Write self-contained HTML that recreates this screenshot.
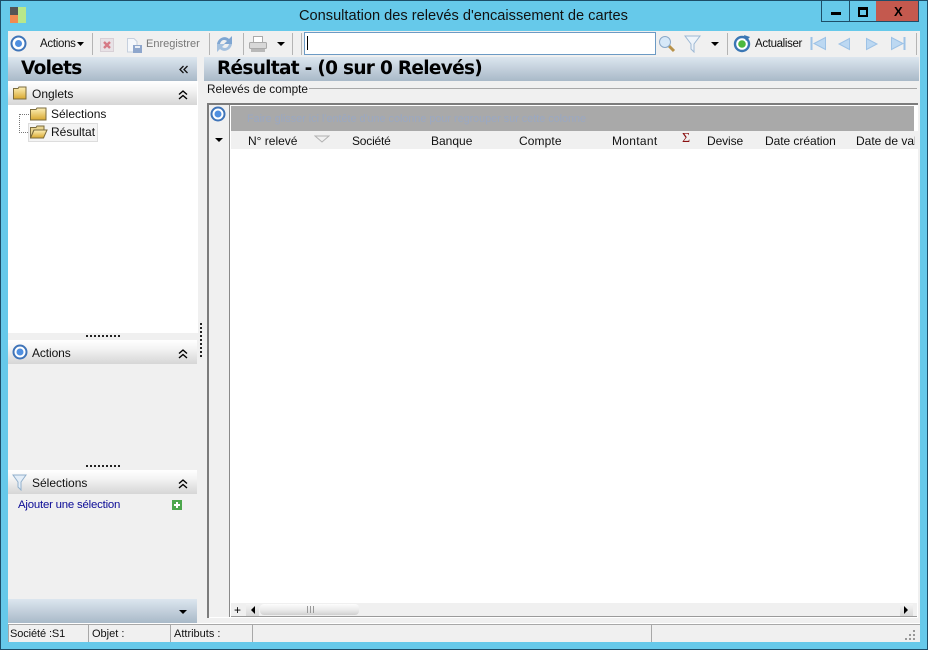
<!DOCTYPE html>
<html><head><meta charset="utf-8"><style>
html,body{margin:0;padding:0}
body{width:928px;height:650px;overflow:hidden;position:relative;background:#66c9ea;font:12px "Liberation Sans",sans-serif;color:#111}
.a,.t,svg{position:absolute}
.t{white-space:nowrap;line-height:14px}
.hd{position:absolute;background:linear-gradient(#dce6ef,#a9b9c8)}
.sub{position:absolute;left:8px;width:189px;height:24px;background:linear-gradient(#fff,#f4f4f4 35%,#d6d6d6)}
.sep{position:absolute;top:33px;width:1px;height:22px;background:#b4b4b4}
.b{font:bold 18.500px "DejaVu Sans",sans-serif;line-height:22px;letter-spacing:-.7px}
.col{top:134px}
</style></head><body>
<svg width="0" height="0"><defs>
<linearGradient id="g" x1="0" y1="0" x2="0" y2="1"><stop offset="0" stop-color="#fdf0b8"/><stop offset="1" stop-color="#d8a830"/></linearGradient>
</defs></svg>
<div class="a" style="left:0;top:0;width:926px;height:648px;border:1px solid #1d4d68"></div>
<svg style="left:10px;top:7px" width="16" height="16"><rect width="8" height="8" fill="#555"/><rect y="8" width="8" height="8" fill="#f08a50"/><rect x="8" width="8" height="16" fill="#b8e78a"/></svg>
<div class="t" style="left:299px;top:8px;font-size:14.600px;line-height:17px;color:#111">Consultation des relevés d'encaissement de cartes</div>
<div class="a" style="left:821px;top:1px;width:96px;height:20px;border:1px solid #1d4d68;border-top:0;background:#66c9ea"></div>
<div class="a" style="left:849px;top:1px;width:1px;height:20px;background:#1d4d68"></div>
<div class="a" style="left:876px;top:1px;width:42px;height:20px;background:#c4594e;border-bottom:1px solid #1d4d68;border-right:1px solid #1d4d68"></div>
<div class="a" style="left:831px;top:12px;width:10px;height:3px;background:#000"></div>
<div class="a" style="left:858px;top:7px;width:6px;height:5px;border:2px solid #000;border-top-width:3px"></div>
<div class="t" style="left:894px;top:4px;font:bold 13px/16px 'Liberation Sans',sans-serif;color:#000">X</div>

<!-- content background -->
<div class="a" style="left:8px;top:31px;width:912px;height:611px;background:#f0f0f0"></div>

<!-- toolbar -->
<svg style="left:10px;top:35px" width="17" height="17"><circle cx="8.500" cy="8.500" r="7" fill="#fff" stroke="#3f74b8" stroke-width="2"/><circle cx="8.500" cy="8.500" r="3.500" fill="#4f8fe0"/></svg>
<div class="t" style="left:40px;top:37px;font-size:11.500px;letter-spacing:-.3px">Actions</div>
<svg style="left:76px;top:42px" width="9" height="5"><path d="M1 0H8L4.500 4Z" fill="#000"/></svg>
<div class="sep" style="left:92px"></div>
<svg style="left:100px;top:37px" width="14" height="15"><rect x=".5" y="1.500" width="13" height="13" fill="#e8e2e6" stroke="#d8d0d6"/><path d="M4 5L10 11M10 5L4 11" stroke="#d67a86" stroke-width="2.400"/></svg>
<svg style="left:126px;top:37px" width="17" height="17"><path d="M1.500 1.500H8L11 4.500V15H1.500Z" fill="#f4f7fb" stroke="#c6d0de"/><rect x="7" y="8" width="9" height="8" fill="#8ea6cc"/><rect x="9" y="9" width="5" height="2" fill="#e8eef6"/></svg>
<div class="t" style="left:146px;top:37px;font-size:11px;color:#777">Enregistrer</div>
<div class="sep" style="left:209px"></div>
<svg style="left:216px;top:35px" width="17" height="18"><path d="M1 9C2 3 9 0 13 4L16 1V9H8L11 6C8 4 5 5 4 9Z" fill="#7fa6d2"/><path d="M16 9C15 15 8 18 4 14L1 17V9H9L6 12C9 14 12 13 13 9Z" fill="#a4c0de"/></svg>
<div class="sep" style="left:243px"></div>
<svg style="left:249px;top:35px" width="18" height="18"><rect x="4.500" y="1.500" width="9" height="6" fill="#fff" stroke="#aaa"/><rect x=".5" y="7.500" width="17" height="6" rx="1" fill="#d8d8d8" stroke="#aaa"/><rect x="2" y="14" width="14" height="3" fill="#b8b8b8"/></svg>
<svg style="left:277px;top:42px" width="9" height="5"><path d="M0 0H8L4 4Z" fill="#000"/></svg>
<div class="sep" style="left:292px"></div>
<div class="sep" style="left:301px"></div>
<div class="a" style="left:304px;top:32px;width:350px;height:21px;background:#fff;border:1px solid #6c9ac4"></div>
<div class="a" style="left:307px;top:36px;width:1px;height:14px;background:#000"></div>
<svg style="left:658px;top:35px" width="18" height="18"><path d="M10 10L16 16" stroke="#b8924a" stroke-width="3"/><circle cx="7" cy="7" r="5.500" fill="#d6e8f8" stroke="#8aa8c8"/></svg>
<svg style="left:684px;top:35px" width="17" height="18"><path d="M1 1H16L10 9V17L7 14V9Z" fill="#eef4fa" stroke="#9db8d4"/></svg>
<svg style="left:711px;top:42px" width="9" height="5"><path d="M0 0H8L4 4Z" fill="#000"/></svg>
<div class="sep" style="left:727px"></div>
<svg style="left:733px;top:35px" width="18" height="18"><circle cx="9" cy="9" r="7" fill="#fff" stroke="#3a76b4" stroke-width="2.400"/><circle cx="9" cy="9" r="3.800" fill="#4cb83e"/><path d="M11 0L17 2L13 6Z" fill="#3a76b4"/></svg>
<div class="t" style="left:755px;top:37px;font-size:11.500px;letter-spacing:-.35px">Actualiser</div>
<svg style="left:810px;top:36px" width="100" height="16" fill="#bcd8f2" stroke="#9dc2e6"><path d="M1.500 1V14" stroke-width="2"/><path d="M15.500 1.500V13.500L4 7.500Z"/><path d="M39.500 2.500V13.500L29 8Z"/><path d="M56.500 2.500V13.500L67 8Z"/><path d="M81.500 1.500V13.500L93 7.500Z"/><path d="M94.500 1V14" stroke-width="2"/></svg>
<div class="sep" style="left:916px"></div>

<!-- left -->
<div class="hd" style="left:8px;top:57px;width:189px;height:24px"></div>
<div class="t b" style="left:21px;top:58px;color:#000">Volets</div>
<svg style="left:179px;top:65px" width="10" height="9" fill="none" stroke="#111" stroke-width="1.300"><path d="M4.500 1L1 4.500L4.500 8M8.500 1L5 4.500L8.500 8"/></svg>

<div class="a" style="left:8px;top:81px;width:190px;height:252px;background:#fff"></div>
<div class="sub" style="top:81px"></div>
<svg style="left:13px;top:86px" width="15" height="14"><path d="M.5 2.500H5L6 1H13V13H.5Z" fill="url(#g)" stroke="#7a6a3c"/></svg>
<div class="t" style="left:32px;top:87px">Onglets</div>
<svg style="left:178px;top:90px" width="10" height="10" fill="none" stroke="#000" stroke-width="1.400"><path d="M1 4.500L5 1L9 4.500M1 9L5 5.500L9 9"/></svg>
<div class="a" style="left:19px;top:114px;width:10px;height:18px;border-left:1px dotted #777;border-bottom:1px dotted #777;"></div>
<div class="a" style="left:19px;top:114px;width:10px;height:0;border-top:1px dotted #777"></div>
<div class="a" style="left:28px;top:123px;width:68px;height:17px;background:#f4f4f4;border:1px solid #ddd"></div>
<svg style="left:30px;top:107px" width="17" height="14"><path d="M.5 2.500H6L7 1H16V13H.5Z" fill="url(#g)" stroke="#7a6a3c"/></svg>
<svg style="left:30px;top:125px" width="18" height="14"><path d="M.5 2.500H6L7 1H14V5H4L.5 13Z" fill="#e8d490" stroke="#7a6a3c"/><path d="M.5 13L4 5H17L13.500 13Z" fill="url(#g)" stroke="#7a6a3c"/></svg>
<div class="t" style="left:51px;top:107px">Sélections</div>
<div class="t" style="left:51px;top:125px">Résultat</div>

<div class="a" style="left:86px;top:335px;width:34px;border-top:2px dotted #222"></div>
<div class="sub" style="top:340px"></div>
<svg style="left:12px;top:344px" width="16" height="16"><circle cx="8" cy="8" r="6.500" fill="#fff" stroke="#3f74b8" stroke-width="2"/><circle cx="8" cy="8" r="3.500" fill="#4f8fe0"/></svg>
<div class="t" style="left:32px;top:346px;letter-spacing:-.1px">Actions</div>
<svg style="left:178px;top:349px" width="10" height="10" fill="none" stroke="#000" stroke-width="1.400"><path d="M1 4.500L5 1L9 4.500M1 9L5 5.500L9 9"/></svg>

<div class="a" style="left:86px;top:465px;width:34px;border-top:2px dotted #222"></div>
<div class="sub" style="top:470px"></div>
<svg style="left:12px;top:474px" width="15" height="17"><path d="M1 1H14L9 8V16L6 13V8Z" fill="#e4eef8" stroke="#92b0cc"/></svg>
<div class="t" style="left:32px;top:476px">Sélections</div>
<svg style="left:178px;top:479px" width="10" height="10" fill="none" stroke="#000" stroke-width="1.400"><path d="M1 4.500L5 1L9 4.500M1 9L5 5.500L9 9"/></svg>
<div class="t" style="left:18px;top:498px;color:#0a0a96;font-size:11.400px;letter-spacing:-.2px">Ajouter une sélection</div>
<svg style="left:172px;top:500px" width="10" height="10"><rect width="10" height="10" fill="#4ca64c"/><path d="M5 2V8M2 5H8" stroke="#fff" stroke-width="2"/></svg>

<div class="hd" style="left:8px;top:599px;width:189px;height:24px"></div>
<svg style="left:179px;top:610px" width="9" height="5"><path d="M0 0H8L4 4Z" fill="#000"/></svg>

<div class="a" style="left:200px;top:323px;height:34px;border-left:2px dotted #222"></div>

<!-- right -->
<div class="hd" style="left:204px;top:57px;width:715px;height:24px"></div>
<div class="t b" style="left:217px;top:58px;color:#000">Résultat - (0 sur 0 Relevés)</div>
<div class="t" style="left:207px;top:82px;font-size:11.800px">Relevés de compte</div>
<div class="a" style="left:309px;top:88px;width:608px;height:1px;background:#a8a8a8"></div>

<div class="a" style="left:207px;top:103px;width:711px;height:515px;background:#fff;border-top:2px solid #7c7c7c;border-left:2px solid #7c7c7c;box-sizing:border-box"></div>
<div class="a" style="left:209px;top:105px;width:21px;height:512px;background:#f0f0f0"></div>
<div class="a" style="left:229px;top:105px;width:1px;height:512px;background:#8a8a8a"></div>
<svg style="left:210px;top:106px" width="16" height="16"><circle cx="8" cy="8" r="6.500" fill="#fff" stroke="#3f74b8" stroke-width="2"/><circle cx="8" cy="8" r="3.500" fill="#4f8fe0"/></svg>
<svg style="left:215px;top:138px" width="9" height="5"><path d="M0 0H8L4 4Z" fill="#000"/></svg>
<div class="a" style="left:231px;top:106px;width:683px;height:25px;background:#a9a9a9"></div>
<div class="t" style="left:247px;top:112px;font-size:10.800px;color:#9aa8c2">Faire glisser ici l'entête d'une colonne pour regrouper sur cette colonne</div>
<div class="a" style="left:231px;top:131px;width:687px;height:18px;background:#f0f0f0;overflow:hidden"></div>
<div class="t col" style="left:248px">N° relevé</div>
<svg style="left:314px;top:135px" width="16" height="9" fill="none" stroke="#b0b0b0"><path d="M1 1H15L8 7Z"/></svg>
<div class="t col" style="left:352px;letter-spacing:-.2px">Société</div>
<div class="t col" style="left:431px">Banque</div>
<div class="t col" style="left:519px;letter-spacing:.1px">Compte</div>
<div class="t col" style="left:612px;letter-spacing:.3px">Montant</div>
<div class="t" style="left:682px;top:132px;font:14px/14px 'Liberation Serif',serif;color:#8a1010">Σ</div>
<div class="t col" style="left:707px;letter-spacing:-.1px">Devise</div>
<div class="t col" style="left:765px;letter-spacing:-.05px">Date création</div>
<div class="t col" style="left:856px;width:59px;overflow:hidden">Date de valeur</div>

<!-- scrollbar -->
<div class="a" style="left:231px;top:603px;width:686px;background:#f0f0f0;border-bottom:1px solid #9a9a9a;height:13px"></div>
<div class="t" style="left:234px;top:603px;font-size:12px;color:#000">+</div>
<div class="a" style="left:246px;top:604px;width:13px;height:12px;background:linear-gradient(#f4f4f4,#d8d8d8)"></div>
<svg style="left:250px;top:606px" width="6" height="9"><path d="M5 0V8L1 4Z" fill="#000"/></svg>
<div class="a" style="left:260px;top:604px;width:99px;height:11px;border-radius:4px;background:linear-gradient(#fdfdfd,#e8e8e8 60%,#d0d0d0)"></div>
<div class="a" style="left:307px;top:606px;width:7px;height:7px;background:repeating-linear-gradient(90deg,#999 0 1px,transparent 1px 3px)"></div>
<div class="a" style="left:900px;top:604px;width:13px;height:12px;background:linear-gradient(#f4f4f4,#d8d8d8)"></div>
<svg style="left:903px;top:606px" width="6" height="9"><path d="M1 0V8L5 4Z" fill="#000"/></svg>

<!-- status bar -->
<div class="a" style="left:8px;top:623px;width:912px;height:1px;background:#fff"></div>
<div class="a" style="left:8px;top:624px;width:912px;height:1px;background:#a8a8a8"></div>
<div class="a" style="left:8px;top:624px;width:1px;height:18px;background:#a8a8a8"></div>
<div class="a" style="left:88px;top:624px;width:1px;height:18px;background:#a8a8a8"></div>
<div class="a" style="left:170px;top:624px;width:1px;height:18px;background:#a8a8a8"></div>
<div class="a" style="left:252px;top:624px;width:1px;height:18px;background:#a8a8a8"></div>
<div class="a" style="left:651px;top:624px;width:1px;height:18px;background:#a8a8a8"></div>
<div class="t" style="left:10px;top:627px;font-size:11px;letter-spacing:-.1px">Société :S1</div>
<div class="t" style="left:92px;top:627px;font-size:11px">Objet :</div>
<div class="t" style="left:174px;top:627px;font-size:11px">Attributs :</div>
<svg style="left:904px;top:629px" width="12" height="12" fill="#999"><rect x="9" y="1" width="2" height="2"/><rect x="5" y="5" width="2" height="2"/><rect x="9" y="5" width="2" height="2"/><rect x="1" y="9" width="2" height="2"/><rect x="5" y="9" width="2" height="2"/><rect x="9" y="9" width="2" height="2"/></svg>
</body></html>
